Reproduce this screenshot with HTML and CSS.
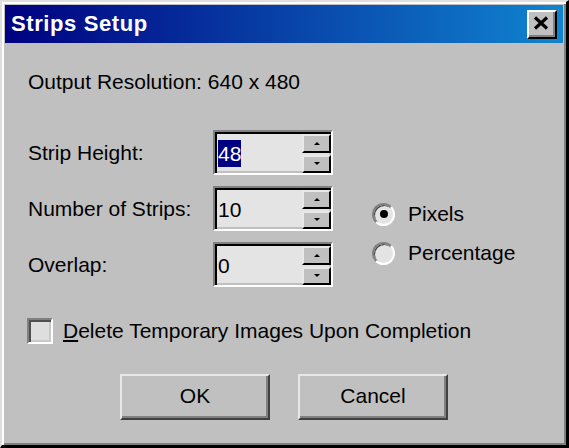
FILE: index.html
```html
<!DOCTYPE html>
<html>
<head>
<meta charset="utf-8">
<link rel="stylesheet" href="styles.css">
</head>
<body>
<div class="window">
  <div class="titlebar">
    <span class="title">Strips Setup</span>
    <div class="close">
      <svg width="16" height="14" viewBox="0 0 16 14"><path d="M2 1.5 L14 12.5 M14 1.5 L2 12.5" stroke="#000" stroke-width="3.2" fill="none"/></svg>
    </div>
  </div>
  <div class="body">
    <div class="res">Output Resolution: 640 x 480</div>
    <div class="settings">
      <div class="fields">
        <div class="row">
          <span class="label">Strip Height:</span>
          <div class="spin">
            <span class="value"><span class="sel">48</span></span>
            <div class="arrows"><div class="abtn"><i class="up"></i></div><div class="abtn"><i class="down"></i></div></div>
          </div>
        </div>
        <div class="row">
          <span class="label">Number of Strips:</span>
          <div class="spin">
            <span class="value">10</span>
            <div class="arrows"><div class="abtn"><i class="up"></i></div><div class="abtn"><i class="down"></i></div></div>
          </div>
        </div>
        <div class="row">
          <span class="label">Overlap:</span>
          <div class="spin">
            <span class="value">0</span>
            <div class="arrows"><div class="abtn"><i class="up"></i></div><div class="abtn"><i class="down"></i></div></div>
          </div>
        </div>
      </div>
      <div class="radios">
        <div class="ritem"><span class="radio on"></span><span>Pixels</span></div>
        <div class="ritem"><span class="radio"></span><span>Percentage</span></div>
      </div>
    </div>
    <div class="check"><span class="box"></span><span><u>D</u>elete Temporary Images Upon Completion</span></div>
    <div class="buttons">
      <div class="btn">OK</div>
      <div class="btn">Cancel</div>
    </div>
  </div>
</div>
</body>
</html>
```
FILE: styles.css
```css
* { box-sizing: border-box; }
html, body { margin: 0; padding: 0; }
body {
  width: 569px;
  height: 448px;
  background: #000;
  font-family: "Liberation Sans", Arial, sans-serif;
  font-size: 21px;
  line-height: 24px;
  color: #000;
}
.window {
  width: 569px;
  height: 448px;
  background: #c0c0c0;
  border-style: solid;
  border-width: 2px 3px 3px 2px;
  border-color: #dfdfdf #000 #000 #dfdfdf;
  box-shadow: inset 2px 2px 0 #fff, inset -2px -2px 0 #808080;
  padding: 3px 3px 4px 3px;
  display: flex;
  flex-direction: column;
}
.titlebar {
  height: 38px;
  background: linear-gradient(to right, #000080, #1084d0);
  display: flex;
  align-items: center;
  justify-content: space-between;
  padding: 0 6px 0 6px;
}
.title {
  color: #fff;
  font-weight: bold;
  font-size: 22px;
  letter-spacing: 0.6px;
}
.close {
  width: 30px;
  height: 29px;
  background: #c0c0c0;
  border-style: solid;
  border-width: 2px;
  border-color: #fff #000 #000 #fff;
  box-shadow: inset -2px -2px 0 #808080;
  display: flex;
  align-items: center;
  justify-content: center;
  padding: 0 2px 2px 0;
}
.close svg { display: block; }
.body {
  flex: 1;
  padding: 0 22px;
  display: flex;
  flex-direction: column;
}
.res {
  margin-top: 27px;
  padding-left: 1px;
}
.settings {
  margin-top: 36px;
  display: flex;
}
.fields {
  display: flex;
  flex-direction: column;
  gap: 11px;
}
.row {
  display: flex;
  align-items: center;
}
.label {
  width: 186px;
  padding-left: 1px;
}
.spin {
  width: 120px;
  height: 45px;
  background: #e4e4e4;
  border-style: solid;
  border-width: 2px;
  border-color: #808080 #fff #fff #808080;
  box-shadow: inset 2px 2px 0 #000, inset -2px -2px 0 #c0c0c0;
  display: flex;
  align-items: center;
  justify-content: space-between;
  padding: 2px 0 0 3px;
}
.value { line-height: 27px; }
.sel {
  display: inline-block;
  background: #000080;
  color: #fff;
  line-height: 27px;
}
.arrows {
  align-self: stretch;
  width: 29px;
  display: flex;
  flex-direction: column;
  gap: 2px;
  margin-bottom: 0;
}
.abtn {
  flex: 1;
  background: #c0c0c0;
  border-style: solid;
  border-width: 2px;
  border-color: #e8e8e8 #000 #000 #e8e8e8;
  display: flex;
  align-items: center;
  justify-content: center;
}
.abtn i { display: block; width: 0; height: 0; border-left: 3px solid transparent; border-right: 3px solid transparent; }
.abtn .up { border-bottom: 3px solid #000; }
.abtn .down { border-top: 3px solid #000; }
.radios {
  margin-left: 39px;
  margin-top: 72px;
  display: flex;
  flex-direction: column;
  gap: 15px;
}
.ritem {
  display: flex;
  align-items: center;
  gap: 13px;
}
.radio {
  width: 23px;
  height: 23px;
  border-radius: 50%;
  background: #e4e4e4;
  border-style: solid;
  border-width: 2px;
  border-color: #808080 #fff #fff #808080;
  box-shadow: inset 1px 1px 0 #404040;
  display: flex;
  align-items: center;
  justify-content: center;
}
.radio.on::after {
  content: "";
  width: 8px;
  height: 8px;
  border-radius: 50%;
  background: #000;
}
.check {
  margin-top: 31px;
  display: flex;
  align-items: center;
  gap: 10px;
}
.box {
  width: 26px;
  height: 26px;
  background: #dedede;
  border-style: solid;
  border-width: 2px;
  border-color: #808080 #fff #fff #808080;
  box-shadow: inset 2px 2px 0 #505050, inset -2px -2px 0 #c8c8c8;
}
.buttons {
  margin-top: 30px;
  display: flex;
  justify-content: center;
  gap: 28px;
}
.btn {
  width: 150px;
  height: 46px;
  background: #c0c0c0;
  border-style: solid;
  border-width: 2px;
  border-color: #e8e8e8 #404040 #404040 #e8e8e8;
  box-shadow: inset -2px -2px 0 #808080;
  display: flex;
  align-items: center;
  justify-content: center;
  padding-bottom: 2px;
}
```
